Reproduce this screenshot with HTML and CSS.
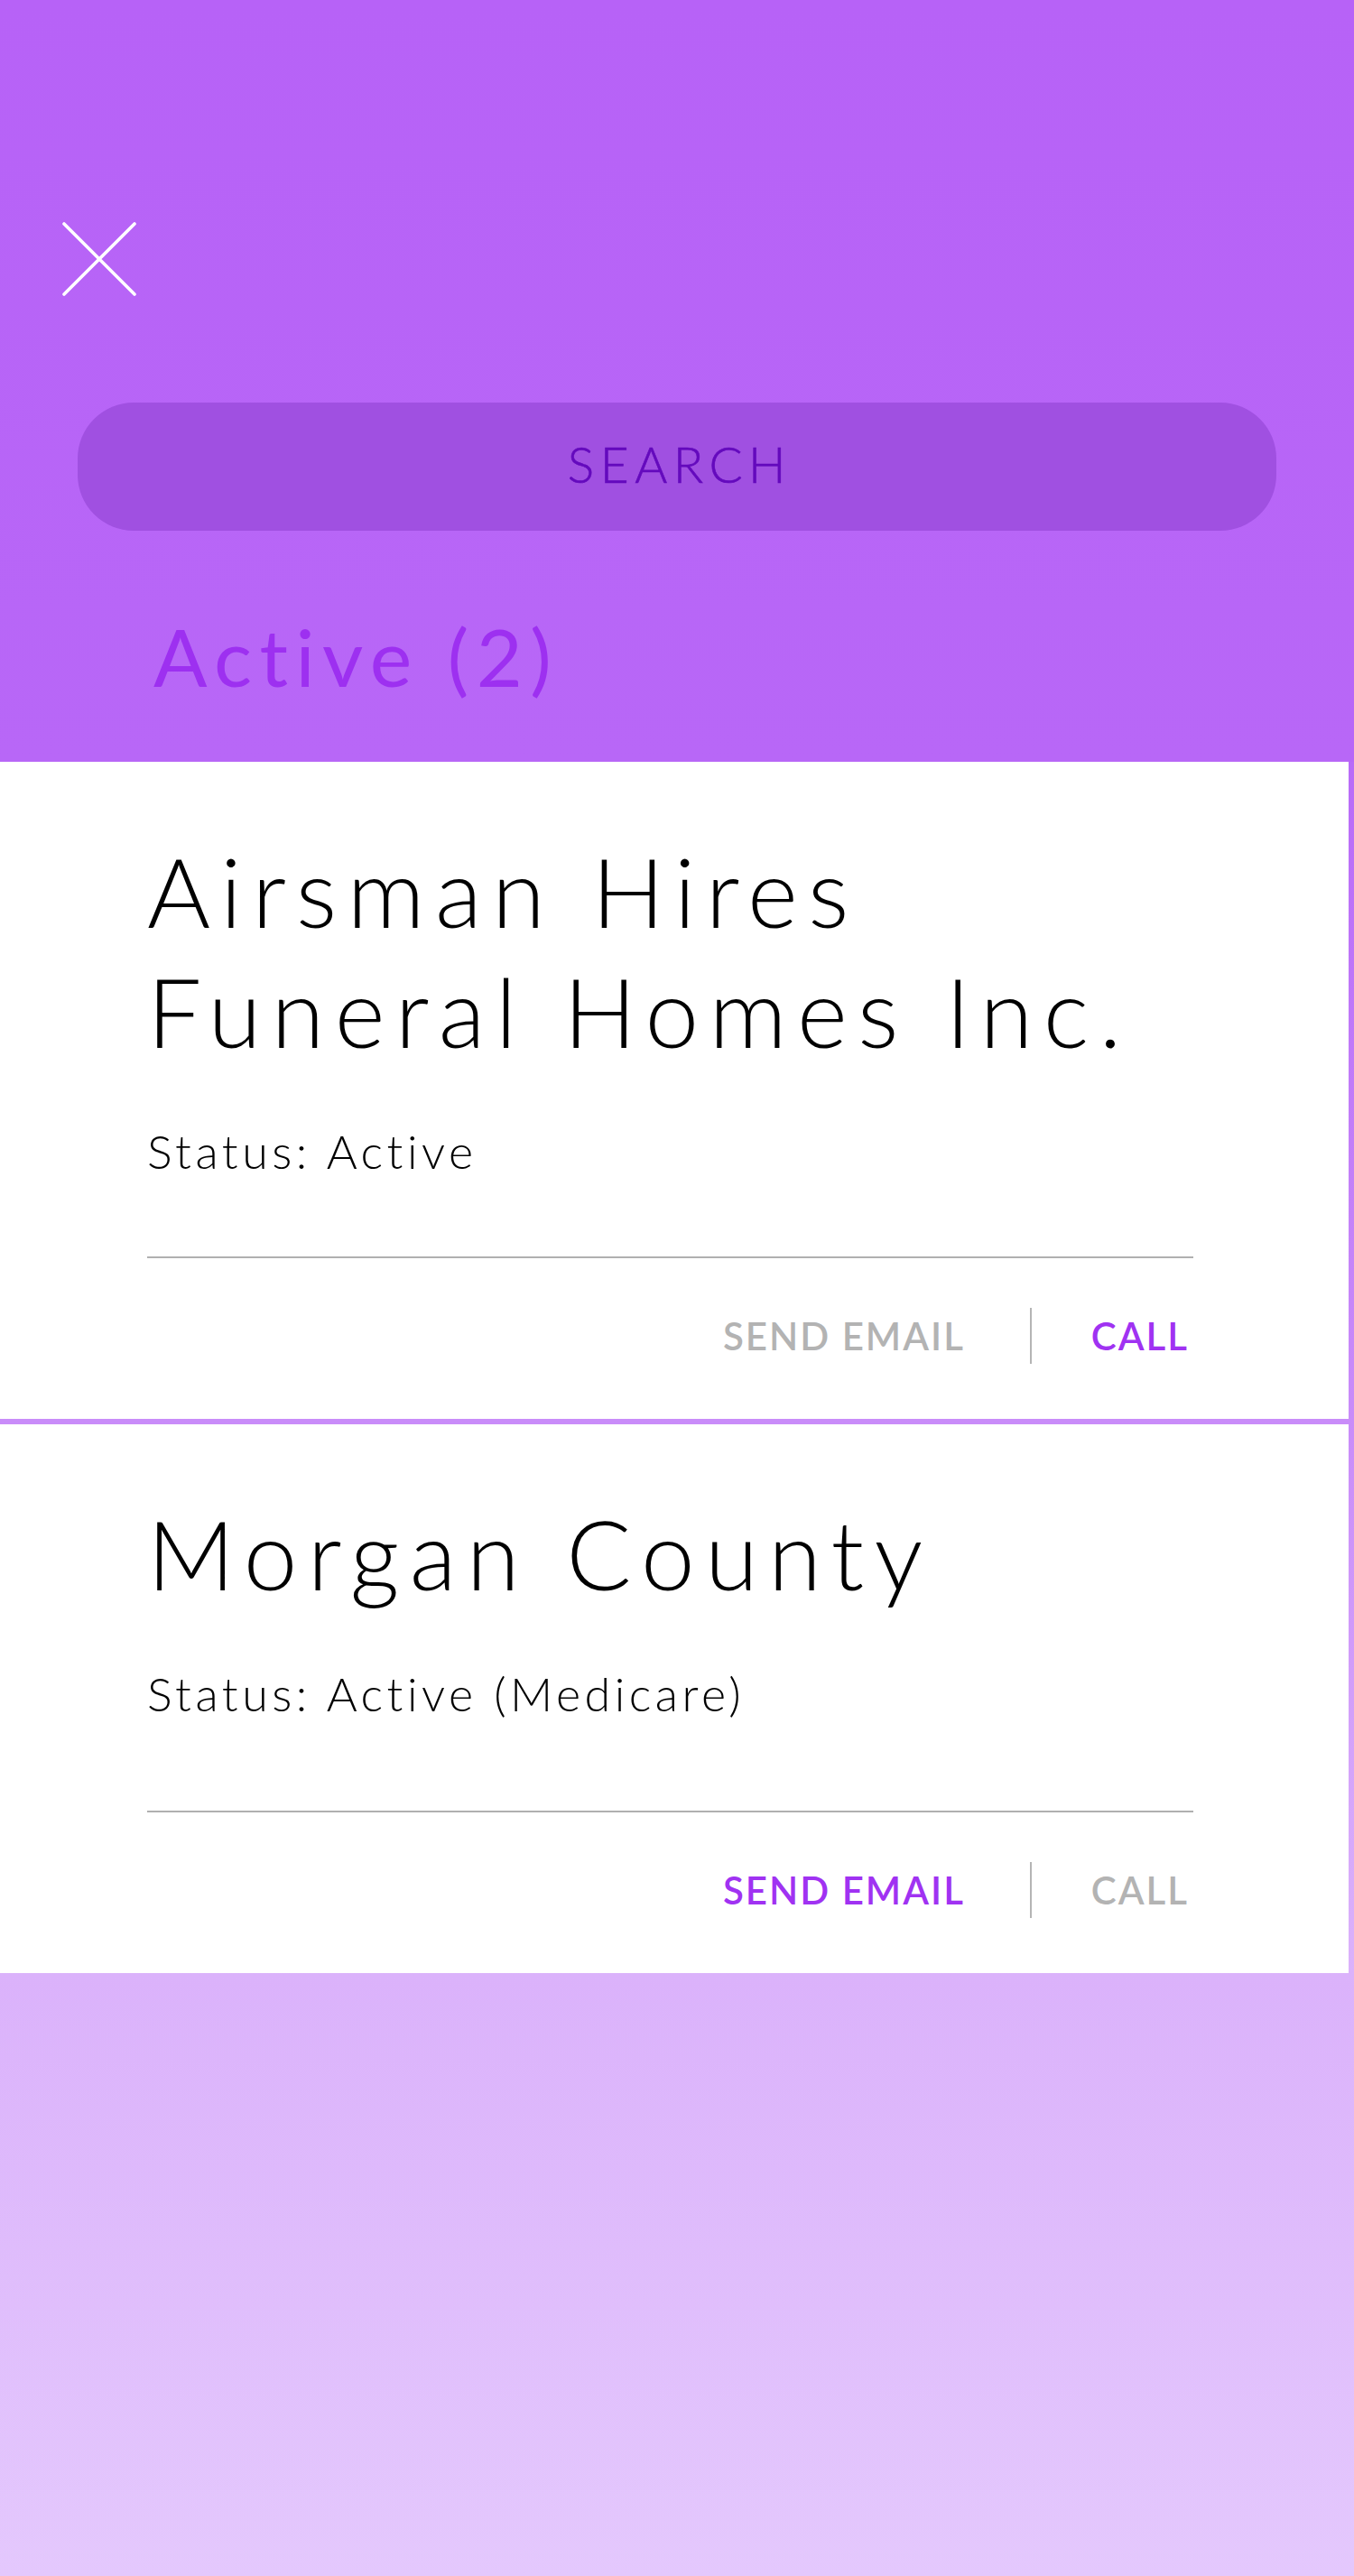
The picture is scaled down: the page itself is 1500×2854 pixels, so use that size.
FILE: index.html
```html
<!DOCTYPE html>
<html lang="en">
<head>
<meta charset="utf-8">
<title>Active accounts</title>
<link rel="stylesheet" href="styles.css">
</head>
<body>
<div class="page">
  <header class="top">
    <button class="close" aria-label="Close">
      <svg width="82" height="82" viewBox="0 0 82 82"><path d="M2 2 L80 80 M80 2 L2 80" stroke="#fff" stroke-width="3.6" stroke-linecap="round" fill="none"/></svg>
    </button>
    <div class="search">SEARCH</div>
    <h2 class="group-title">Active (2)</h2>
  </header>
  <main class="list">
    <section class="card">
      <h1 class="name">Airsman Hires<br>Funeral Homes Inc.</h1>
      <p class="status">Status: Active</p>
      <hr class="rule">
      <div class="actions">
        <span class="act">SEND EMAIL</span>
        <span class="sep"></span>
        <span class="act on">CALL</span>
      </div>
    </section>
    <section class="card">
      <h1 class="name">Morgan County</h1>
      <p class="status status-tall">Status: Active (Medicare)</p>
      <hr class="rule">
      <div class="actions">
        <span class="act on">SEND EMAIL</span>
        <span class="sep"></span>
        <span class="act">CALL</span>
      </div>
    </section>
  </main>
</div>
</body>
</html>
```

FILE: styles.css
```css
html, body {
  margin: 0;
  padding: 0;
}
body {
  width: 1500px;
  min-height: 2854px;
  font-family: "Lato", "Open Sans", sans-serif;
  background: linear-gradient(to bottom, #b763f7 0%, #b96bf8 29.6%, #c98cf9 55.2%, #dbb2fb 76.7%, #e4c8fd 100%);
}
.page {
  display: flex;
  flex-direction: column;
}
.top {
  height: 844px;
  box-sizing: border-box;
  background: linear-gradient(to bottom, #b762f7, #b867f7);
  padding-top: 246px;
  display: flex;
  flex-direction: column;
}
.close {
  margin: 0 0 0 69px;
  padding: 0;
  border: 0;
  background: none;
  width: 82px;
  height: 82px;
  display: block;
}
.close svg { display: block; }
.search {
  margin: 118px 0 0 86px;
  width: 1328px;
  height: 142px;
  border-radius: 62px;
  background: #a050e1;
  color: #640abd;
  font-size: 55px;
  font-weight: 300;
  letter-spacing: 6.5px;
  display: flex;
  align-items: center;
  justify-content: center;
  padding-bottom: 6px;
  padding-left: 6px;
  box-sizing: border-box;
  -webkit-text-stroke: 0.6px #640abd;
}
.group-title {
  margin: 89px 0 0 170px;
  font-size: 88px;
  line-height: 100px;
  font-weight: 400;
  color: #9d30f0;
  letter-spacing: 8.5px;
}
.list {
  display: flex;
  flex-direction: column;
  gap: 6px;
  width: 1494px;
}
.card {
  background: #fff;
  padding: 76px 0 0 163px;
}
.name {
  margin: 0;
  font-size: 107px;
  line-height: 133px;
  font-weight: 300;
  color: #000;
  letter-spacing: 11.3px;
}
.status {
  margin: 59px 0 0;
  font-size: 52px;
  line-height: 60px;
  font-weight: 300;
  color: #000;
  letter-spacing: 4.5px;
}
.status-tall { padding-bottom: 13px; }
.rule {
  margin: 87px 0 0;
  width: 1159px;
  height: 2px;
  border: 0;
  background: #b0b0b0;
}
.actions {
  width: 1159px;
  height: 62px;
  margin: 55px 0 61px;
  display: flex;
  align-items: center;
  justify-content: flex-end;
}
.act {
  font-size: 42px;
  font-weight: 600;
  letter-spacing: 2px;
  color: #b3b3b3;
  padding-right: 5px;
}
.act.on { color: #a032f2; }
.sep {
  width: 2px;
  height: 62px;
  background: #b5b5b5;
  margin: 0 66px 0 67px;
}
```
